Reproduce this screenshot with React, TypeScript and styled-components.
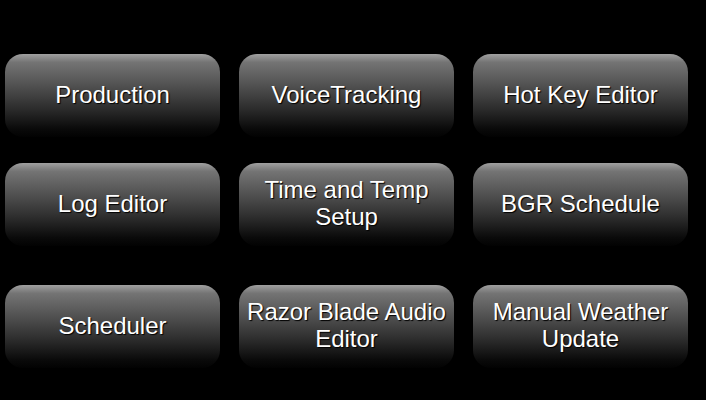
import styled, { createGlobalStyle } from 'styled-components';

const GlobalStyle = createGlobalStyle`
  html, body {
    margin: 0;
    padding: 0;
    background: #000;
  }
  body {
    font-family: "Liberation Sans", Arial, sans-serif;
  }
`;

const Screen = styled.div`
  width: 706px;
  height: 400px;
  background: #000;
  padding: 54px 0 0 5px;
  box-sizing: border-box;
  overflow: hidden;
`;

const Row = styled.div<{ $gap: number }>`
  display: grid;
  grid-template-columns: repeat(3, 215px);
  column-gap: 19px;
  margin-top: ${(p) => p.$gap}px;
`;

const MenuButton = styled.button`
  height: 83px;
  border: none;
  border-radius: 18px;
  padding: 0 4px 3px;
  background: linear-gradient(
    to bottom,
    #a0a0a0 0%,
    #747474 10%,
    #575757 33%,
    #2c2c2c 66%,
    #0a0a0a 90%,
    #020202 100%
  );
  color: #fff;
  font-family: "Liberation Sans", Arial, sans-serif;
  font-size: 24px;
  line-height: 27px;
  text-align: center;
  text-shadow: 1px 1px 1px #000;
  cursor: pointer;
  display: flex;
  align-items: center;
  justify-content: center;
`;

const rows = [
  { gap: 0, items: ['Production', 'VoiceTracking', 'Hot Key Editor'] },
  { gap: 26, items: ['Log Editor', 'Time and Temp\nSetup', 'BGR Schedule'] },
  { gap: 39, items: ['Scheduler', 'Razor Blade Audio\nEditor', 'Manual Weather\nUpdate'] },
];

export default function App() {
  return (
    <>
      <GlobalStyle />
      <Screen>
        {rows.map((r) => (
          <Row key={r.items[0]} $gap={r.gap}>
            {r.items.map((label) => (
              <MenuButton key={label}>
                <span>
                  {label.split('\n').map((line, i) => (
                    <span key={line}>
                      {i > 0 && <br />}
                      {line}
                    </span>
                  ))}
                </span>
              </MenuButton>
            ))}
          </Row>
        ))}
      </Screen>
    </>
  );
}
